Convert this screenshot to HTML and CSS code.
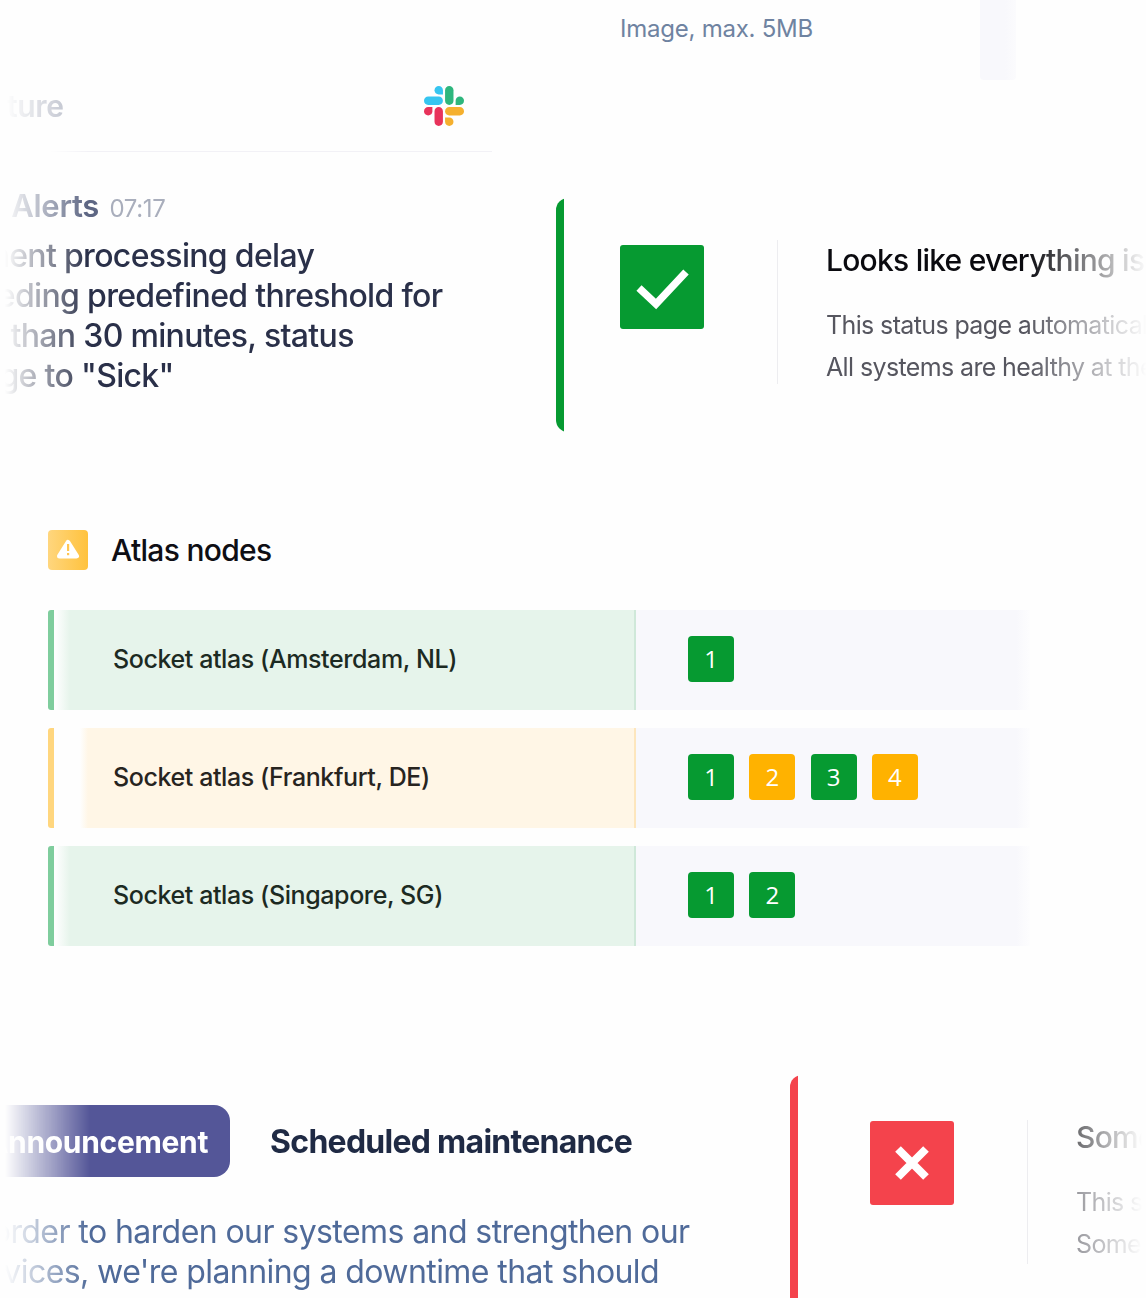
FILE: index.html
```html
<!DOCTYPE html>
<html lang="en">
<head>
  <meta charset="UTF-8">
  <title>Status</title>
  <link rel="stylesheet" href="styles.css">
</head>

<body>

<section class="top-row">
  <div class="slack-col">
    <div class="slack-head">
      <div class="slack-title">Feature</div>
      <svg class="slack-logo" viewBox="0 0 122.8 122.8">
        <path d="M25.8 77.6c0 7.1-5.8 12.9-12.9 12.9S0 84.7 0 77.6s5.8-12.9 12.9-12.9h12.9v12.9z" fill="#e8335b"/>
        <path d="M32.3 77.6c0-7.1 5.8-12.9 12.9-12.9s12.9 5.8 12.9 12.9v32.3c0 7.1-5.8 12.9-12.9 12.9s-12.9-5.8-12.9-12.9V77.6z" fill="#e8335b"/>
        <path d="M45.2 25.8c-7.1 0-12.9-5.8-12.9-12.9S38.1 0 45.2 0s12.9 5.8 12.9 12.9v12.9H45.2z" fill="#36c5f0"/>
        <path d="M45.2 32.3c7.1 0 12.9 5.8 12.9 12.9s-5.8 12.9-12.9 12.9H12.9C5.8 58.1 0 52.3 0 45.2s5.8-12.9 12.9-12.9h32.3z" fill="#36c5f0"/>
        <path d="M97 45.2c0-7.1 5.8-12.9 12.9-12.9s12.9 5.8 12.9 12.9-5.8 12.9-12.9 12.9H97V45.2z" fill="#2eb67d"/>
        <path d="M90.5 45.2c0 7.1-5.8 12.9-12.9 12.9s-12.9-5.8-12.9-12.9V12.9C64.7 5.8 70.5 0 77.6 0s12.9 5.8 12.9 12.9v32.3z" fill="#2eb67d"/>
        <path d="M77.6 97c7.1 0 12.9 5.8 12.9 12.9s-5.8 12.9-12.9 12.9-12.9-5.8-12.9-12.9V97h12.9z" fill="#f5b02e"/>
        <path d="M77.6 90.5c-7.1 0-12.9-5.8-12.9-12.9s5.8-12.9 12.9-12.9h32.3c7.1 0 12.9 5.8 12.9 12.9s-5.8 12.9-12.9 12.9H77.6z" fill="#f5b02e"/>
      </svg>
    </div>
    <div class="slack-msg">
      <div class="slack-from"><b>Pulse Alerts</b> <span>07:17</span></div>
      <p>Payment processing delay<br>exceeding predefined threshold for<br>more than 30 minutes, status<br>change to "Sick"</p>
    </div>
  </div>

  <div class="status-col">
    <div class="hint-row">
      <div class="hint">Image, max. 5MB</div>
      <div class="ghost-block"></div>
    </div>
    <div class="status-card ok">
      <div class="status-icon">
        <svg viewBox="0 0 84 84"><path d="M19 43 L36 59 L66 27" fill="none" stroke="#fff" stroke-width="7.5"/></svg>
      </div>
      <div class="status-text">
        <h2>Looks like everything is working</h2>
        <p>This status page automatically updates<br>All systems are healthy at the moment</p>
      </div>
    </div>
  </div>
</section>

<section class="nodes">
  <div class="nodes-head">
    <div class="warn-icon">
      <svg viewBox="0 0 40 40">
        <path d="M20 12.5 L28.5 26 L11.5 26 Z" fill="#fff" stroke="#fff" stroke-width="5" stroke-linejoin="round"/>
        <rect x="19" y="14" width="2.2" height="7" fill="#ffc552"/>
        <rect x="19" y="23" width="2.2" height="2.2" fill="#ffc552"/>
      </svg>
    </div>
    <h2>Atlas nodes</h2>
  </div>

  <div class="node-row green">
    <div class="node-name">Socket atlas (Amsterdam, NL)</div>
    <div class="node-badges">
      <span class="badge">1</span>
    </div>
  </div>
  <div class="node-row amber">
    <div class="node-name">Socket atlas (Frankfurt, DE)</div>
    <div class="node-badges">
      <span class="badge">1</span>
      <span class="badge warn">2</span>
      <span class="badge">3</span>
      <span class="badge warn">4</span>
    </div>
  </div>
  <div class="node-row green">
    <div class="node-name">Socket atlas (Singapore, SG)</div>
    <div class="node-badges">
      <span class="badge">1</span>
      <span class="badge">2</span>
    </div>
  </div>
</section>

<section class="bottom-row">
  <div class="notice-col">
    <div class="notice-head">
      <div class="pill">Announcement</div>
      <h2>Scheduled maintenance</h2>
    </div>
    <p>In order to harden our systems and strengthen our<br>services, we're planning a downtime that should</p>
  </div>
  <div class="status-card bad">
    <div class="status-icon">
      <svg viewBox="0 0 84 84"><path d="M28 28 L56 56 M56 28 L28 56" fill="none" stroke="#fff" stroke-width="8"/></svg>
    </div>
    <div class="status-text">
      <h2>Some systems are down</h2>
      <p>This status page automatically updates<br>Some systems are not healthy</p>
    </div>
  </div>
</section>

</body>
</html>
```

FILE: styles.css
```css
* { margin: 0; padding: 0; box-sizing: border-box; }
html, body { height: 1298px; overflow: hidden; }
body {
  width: 1146px;
  background: #fefefe;
  font-family: 'Inter', sans-serif;
  letter-spacing: -0.02em;
}

.top-row { display: flex; height: 432px; }

.slack-col {
  flex: 0 0 492px;
  margin-right: 64px;
  padding-top: 60px;
}
.slack-head {
  display: flex;
  align-items: center;
  justify-content: space-between;
  height: 92px;
  padding-right: 28px;
  border-bottom: 1px solid #f2f1f6;
  border-image: linear-gradient(90deg, transparent 50px, #f2f1f6 90px) 1;
}
.slack-title {
  margin-left: -44px;
  font-size: 30px;
  font-weight: 600;
  color: #b9bdc9;
  -webkit-mask-image: linear-gradient(90deg, transparent 50px, #000 120px);
  mask-image: linear-gradient(90deg, transparent 50px, #000 120px);
}
.slack-logo { width: 40px; height: 40px; }

.slack-msg {
  padding-top: 34px;
  margin-left: -73px;
  -webkit-mask-image: linear-gradient(90deg, transparent 78px, #000 160px);
  mask-image: linear-gradient(90deg, transparent 78px, #000 160px);
}
.slack-from { font-size: 31px; line-height: 40px; color: #5d6683; white-space: nowrap; }
.slack-from b { font-weight: 600; margin-left: -4px; }
.slack-from span { font-size: 24px; font-weight: 400; color: #a9aebc; margin-left: 2px; }
.slack-msg p {
  margin-top: 7px;
  font-size: 32px;
  font-weight: 450;
  line-height: 40px;
  letter-spacing: -0.021em;
  color: #2a3049;
  white-space: nowrap;
}

.status-col { flex: 1; min-width: 0; }
.hint-row { display: flex; height: 198px; padding-left: 64px; }
.hint {
  flex: 0 0 360px;
  padding-top: 14px;
  font-size: 24px;
  line-height: 30px;
  letter-spacing: -0.01em;
  color: #6f83a1;
}
.ghost-block {
  width: 36px;
  height: 80px;
  background: linear-gradient(90deg, #f8f8fc 70%, #fbfbfd);
  border-radius: 0 0 4px 4px;
}

.status-card {
  display: flex;
  height: 234px;
  padding: 47px 0 0 64px;
  border-radius: 12px 0 0 12px;
  background: linear-gradient(90deg, #069a31 8px, transparent 8px);
  overflow: hidden;
}
.status-card.bad {
  height: 240px;
  padding: 46px 0 0 80px;
  background: linear-gradient(90deg, #f4434c 8px, transparent 8px);
}
.status-icon {
  flex: 0 0 84px;
  height: 84px;
  background: #069a31;
  border-radius: 3px;
}
.status-icon svg { display: block; width: 84px; height: 84px; }
.bad .status-icon { background: #f4434c; }

.status-text {
  flex: 0 0 auto;
  height: 144px;
  margin-left: 73px;
  margin-top: -5px;
  padding-left: 48px;
  border-left: 1px solid #ededf0;
  white-space: nowrap;
  -webkit-mask-image: linear-gradient(90deg, #000 250px, transparent 370px);
  mask-image: linear-gradient(90deg, #000 250px, transparent 370px);
}
.status-text h2 {
  font-size: 30px;
  font-weight: 500;
  line-height: 40px;
  letter-spacing: -0.025em;
  color: #0a0a0f;
}
.status-text p {
  margin-top: 24px;
  font-size: 25px;
  line-height: 42px;
  letter-spacing: -0.025em;
  color: #56565f;
}
.bad .status-text {
  margin-top: -1px;
  -webkit-mask-image: linear-gradient(90deg, #000 1px, rgba(0,0,0,0.6) 50px, transparent 115px);
  mask-image: linear-gradient(90deg, #000 1px, rgba(0,0,0,0.6) 50px, transparent 115px);
}
.bad .status-text h2 { margin-top: -3px; }

.nodes { padding: 98px 0 0 48px; }
.nodes-head { display: flex; align-items: center; height: 40px; margin-bottom: 40px; }
.warn-icon {
  width: 40px;
  height: 40px;
  margin-right: 23px;
  background: linear-gradient(90deg, #ffd67e, #ffc23d);
  border-radius: 4px;
}
.warn-icon svg { display: block; width: 40px; height: 40px; }
.nodes-head h2 { font-size: 30px; font-weight: 500; letter-spacing: -0.023em; color: #0e0e14; }

.node-row {
  display: flex;
  width: 982px;
  height: 100px;
  margin-bottom: 18px;
  border-left: 6px solid #7fcd9d;
  border-radius: 3px 0 0 3px;
}
.node-row.amber { border-left-color: #ffd67e; }
.node-name {
  display: flex;
  align-items: center;
  flex: 0 0 582px;
  padding: 0 0 2px 59px;
  font-size: 25px;
  font-weight: 450;
  letter-spacing: -0.016em;
  color: #1c2a22;
  border-right: 2px solid #cfe8d9;
  background: linear-gradient(90deg, transparent 2px, #e6f4eb 16px);
}
.amber .node-name {
  color: #27241f;
  border-right-color: #fde6bd;
  background: linear-gradient(90deg, transparent 26px, #fff6e6 34px);
}
.node-badges {
  display: flex;
  align-items: center;
  gap: 15.3px;
  flex: 1;
  padding: 0 0 2px 52px;
  background: linear-gradient(90deg, #f8f8fc calc(100% - 14px), #fdfdfe);
}
.badge {
  width: 46px;
  height: 46px;
  border-radius: 4px;
  background: #069a31;
  color: #fff;
  font-family: 'Open Sans', sans-serif;
  font-size: 24px;
  line-height: 46px;
  text-align: center;
  letter-spacing: 0;
}
.badge.warn { background: #ffb200; }

.bottom-row { display: flex; margin-top: 129px; }
.notice-col {
  flex: 0 0 790px;
  padding-top: 30px;
  -webkit-mask-image: linear-gradient(90deg, transparent 5px, #000 90px);
  mask-image: linear-gradient(90deg, transparent 5px, #000 90px);
}
.notice-head { display: flex; align-items: center; }
.pill {
  margin-left: -36px;
  padding: 0 22px;
  height: 72px;
  line-height: 74px;
  background: #545698;
  border-radius: 16px;
  color: #fff;
  font-size: 30px;
  font-weight: 700;
}
.notice-head h2 {
  margin-left: 40px;
  padding-top: 1px;
  font-size: 32px;
  font-weight: 700;
  letter-spacing: -0.023em;
  color: #1f2a44;
}
.notice-col p {
  margin: 35px 0 0 -43px;
  font-size: 32px;
  line-height: 40px;
  letter-spacing: -0.018em;
  color: #4f6a99;
  white-space: nowrap;
}
.bottom-row .status-card { flex: 1; min-width: 0; }
```
